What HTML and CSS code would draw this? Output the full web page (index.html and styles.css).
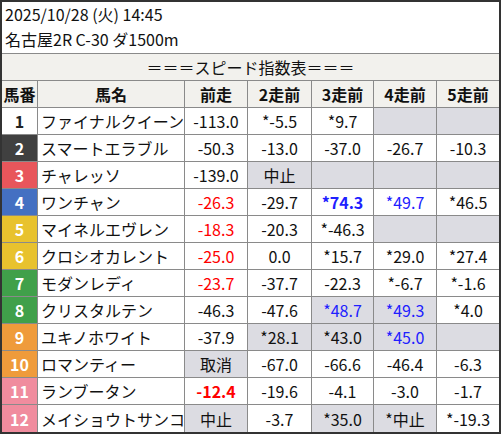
FILE: index.html
```html
<!DOCTYPE html>
<html lang="ja">
<head>
<meta charset="utf-8">
<link rel="stylesheet" href="styles.css">
</head>
<body>
<div class="frame">
  <div class="info">
    <div>2025/10/28 (火) 14:45</div>
    <div>名古屋2R C-30 ダ1500m</div>
  </div>
  <div class="grid">
    <div class="title">＝＝＝スピード指数表＝＝＝</div>

    <div class="hd">馬番</div><div class="hd">馬名</div><div class="hd">前走</div><div class="hd">2走前</div><div class="hd">3走前</div><div class="hd">4走前</div><div class="hd">5走前</div>

    <div class="no w1">1</div><div class="name">ファイナルクイーン</div><div class="c">-113.0</div><div class="c">*-5.5</div><div class="c">*9.7</div><div class="c g"></div><div class="c g"></div>

    <div class="no w2">2</div><div class="name">スマートエラブル</div><div class="c">-50.3</div><div class="c">-13.0</div><div class="c">-37.0</div><div class="c">-26.7</div><div class="c">-10.3</div>

    <div class="no w3">3</div><div class="name">チャレッソ</div><div class="c">-139.0</div><div class="c g">中止</div><div class="c g"></div><div class="c g"></div><div class="c g"></div>

    <div class="no w4">4</div><div class="name">ワンチャン</div><div class="c r">-26.3</div><div class="c">-29.7</div><div class="c b bold">*74.3</div><div class="c b">*49.7</div><div class="c">*46.5</div>

    <div class="no w5">5</div><div class="name">マイネルエヴレン</div><div class="c r">-18.3</div><div class="c">-20.3</div><div class="c">*-46.3</div><div class="c g"></div><div class="c g"></div>

    <div class="no w5">6</div><div class="name">クロシオカレント</div><div class="c r">-25.0</div><div class="c">0.0</div><div class="c">*15.7</div><div class="c">*29.0</div><div class="c">*27.4</div>

    <div class="no w6">7</div><div class="name">モダンレディ</div><div class="c r">-23.7</div><div class="c">-37.7</div><div class="c">-22.3</div><div class="c">*-6.7</div><div class="c">*-1.6</div>

    <div class="no w6">8</div><div class="name">クリスタルテン</div><div class="c">-46.3</div><div class="c">-47.6</div><div class="c g b">*48.7</div><div class="c g b">*49.3</div><div class="c">*4.0</div>

    <div class="no w7">9</div><div class="name">ユキノホワイト</div><div class="c">-37.9</div><div class="c g">*28.1</div><div class="c g">*43.0</div><div class="c g b">*45.0</div><div class="c g"></div>

    <div class="no w7">10</div><div class="name">ロマンティー</div><div class="c g">取消</div><div class="c">-67.0</div><div class="c">-66.6</div><div class="c">-46.4</div><div class="c">-6.3</div>

    <div class="no w8">11</div><div class="name">ランブータン</div><div class="c r bold">-12.4</div><div class="c">-19.6</div><div class="c">-4.1</div><div class="c">-3.0</div><div class="c">-1.7</div>

    <div class="no w8">12</div><div class="name">メイショウトサンコ</div><div class="c g">中止</div><div class="c">-3.7</div><div class="c g">*35.0</div><div class="c g">*中止</div><div class="c">*-19.3</div>
  </div>
</div>
</body>
</html>
```

FILE: styles.css
```css
html, body {
  margin: 0;
  padding: 0;
  background: #ffffff;
}

body {
  font-family: "Noto Sans CJK JP", "Noto Sans", sans-serif;
  font-size: 16px;
  color: #111;
}

.frame {
  box-sizing: border-box;
  width: 501px;
  height: 434px;
  border: 2px solid #333;
  background: #fff;
}

.info {
  height: 51px;
  padding: 0 3px;
  line-height: 25px;
  white-space: nowrap;
}

.grid {
  display: grid;
  grid-template-columns: 35px 146px 62px 63px 61px 62px 62px;
  grid-template-rows: repeat(13, 26px) 27px;
  gap: 1px;
  border-top: 1px solid #8a8a8a;
  background: #8a8a8a;
}

.grid > div {
  display: flex;
  align-items: center;
  justify-content: center;
  background: #fff;
  white-space: nowrap;
  overflow: hidden;
}

.grid > .title {
  grid-column: 1 / -1;
  background: #f2f1ed;
}

.grid > .hd {
  background: #f2f1ed;
  font-weight: bold;
}

.grid > .name {
  justify-content: flex-start;
  padding-left: 3px;
}

.grid > .g {
  background: #dcdce2;
}

.r { color: #ff0000; }
.b { color: #2020ff; }
.bold { font-weight: bold; }

.grid > .no {
  font-weight: bold;
  color: #fff;
}

.grid > .w1 { background: #fff; color: #222; }
.grid > .w2 { background: #404040; }
.grid > .w3 { background: #e8565b; }
.grid > .w4 { background: #4470c2; }
.grid > .w5 { background: #e8c22e; }
.grid > .w6 { background: #40a04a; }
.grid > .w7 { background: #ef9b3b; }
.grid > .w8 { background: #f08c9e; }
```
